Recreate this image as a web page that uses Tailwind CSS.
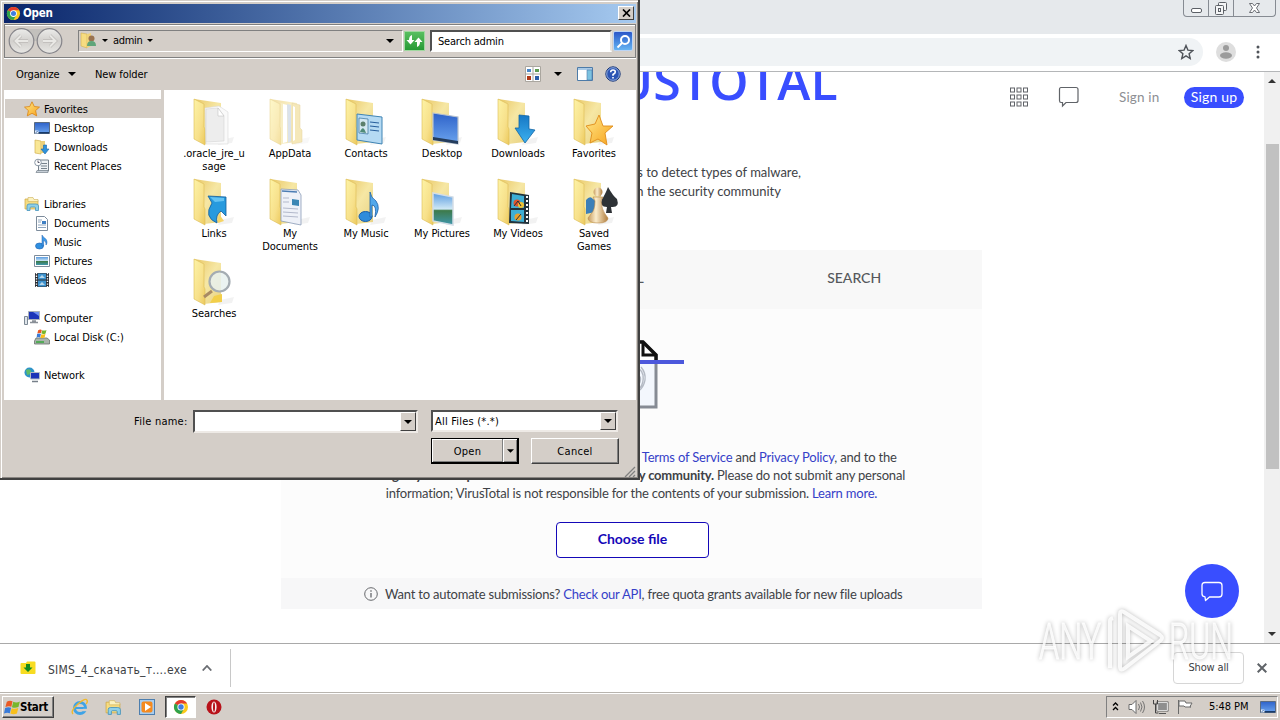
<!DOCTYPE html>
<html lang="en">
<head>
<meta charset="utf-8">
<title>Open</title>
<script src="https://cdn.jsdelivr.net/npm/@tailwindcss/browser@4"></script>
</head>
<body class="bg-white">
<svg width="0" height="0" class="absolute">
  <defs>
    <linearGradient id="gFront" x1="0" y1="0" x2="1" y2="1"><stop offset="0" stop-color="#fdf3a6"/><stop offset=".6" stop-color="#f7e08a"/><stop offset="1" stop-color="#ecc95c"/></linearGradient>
    <linearGradient id="gBack" x1="0" y1="0" x2="1" y2="1"><stop offset="0" stop-color="#e9c765"/><stop offset=".5" stop-color="#f6e7a4"/><stop offset="1" stop-color="#e8d283"/></linearGradient>
    <linearGradient id="gBlue" x1="0" y1="0" x2="0" y2="1"><stop offset="0" stop-color="#2e62c9"/><stop offset="1" stop-color="#6ba4ee"/></linearGradient>
    <linearGradient id="gArrow" x1="0" y1="0" x2="0" y2="1"><stop offset="0" stop-color="#1677c4"/><stop offset="1" stop-color="#3cb1f0"/></linearGradient>
    <linearGradient id="gStar" x1="0" y1="0" x2="1" y2="1"><stop offset="0" stop-color="#ffe98a"/><stop offset="1" stop-color="#f7a21c"/></linearGradient>
    <linearGradient id="gScene" x1="0" y1="0" x2="0" y2="1"><stop offset="0" stop-color="#5a9be0"/><stop offset=".5" stop-color="#cfe8f5"/><stop offset=".55" stop-color="#3d7a4a"/><stop offset="1" stop-color="#3f97ad"/></linearGradient>
    <linearGradient id="gNav" x1="0" y1="0" x2="0" y2="1"><stop offset="0" stop-color="#ececea"/><stop offset=".5" stop-color="#d2d0cd"/><stop offset="1" stop-color="#e8e7e4"/></linearGradient>
    <linearGradient id="gPawn" x1="0" y1="0" x2="1" y2="0"><stop offset="0" stop-color="#c79a5c"/><stop offset=".4" stop-color="#fbeccb"/><stop offset="1" stop-color="#b07c3c"/></linearGradient>
    <symbol id="folder" viewBox="0 0 48 48">
      <path d="M30 42l14-3-2 6-14 2z" fill="#000" opacity=".05"/>
      <path d="M4 1L31 5v39L14 46 4 40z" fill="url(#gBack)"/>
      <path d="M4 1l10 5v23l1 2v16L4 41z" fill="url(#gFront)" stroke="#dcbc55" stroke-width=".6"/>
    </symbol>
    <symbol id="chrome" viewBox="0 0 16 16">
      <circle cx="8" cy="8" r="7" fill="#fbc91b"/>
      <path d="M8 8L1.900 4.500A7 7 0 0 1 14.100 4.500H8z" fill="#e33b2e"/>
      <path d="M1.900 4.500A7 7 0 0 0 8 15l3-5.300L8 8z" fill="#2fa24c"/>
      <circle cx="8" cy="8" r="3.600" fill="#fff"/><circle cx="8" cy="8" r="2.700" fill="#3f7de0"/>
    </symbol>
    <symbol id="star" viewBox="0 0 16 16"><path d="M8 .8l2.300 4.700 5.200.6-3.900 3.500 1.100 5.300L8 12.300l-4.700 2.600 1.100-5.300L.5 6.100l5.200-.6z" fill="url(#gStar)" stroke="#d98312" stroke-width=".8"/></symbol>
    <symbol id="screen" viewBox="0 0 16 16"><path d="M.5 2.500h15v11H.5z" fill="url(#gBlue)" stroke="#5b6b80"/><path d="M1 12h14v1.500H1z" fill="#173a6a"/><path d="M1 10.500h3.500v3H1z" fill="#e6eef8"/><path d="M1.800 12.800l2-2" stroke="#2a5fb0"/></symbol>
    <symbol id="note" viewBox="0 0 16 16"><ellipse cx="5.500" cy="12" rx="4" ry="3" fill="#2f8fe0" stroke="#1c5fae" stroke-width=".6"/><path d="M8 12V1c1 3 5 3 5 7 0 1.500-.5 2.500-1 3 .2-3-1-4-2.400-4.500V12z" fill="#3e9ae8" stroke="#1c5fae" stroke-width=".5"/></symbol>
    <symbol id="film" viewBox="0 0 16 16"><path d="M1 1h14v14H1z" fill="#2a2d33"/><path d="M4 1.500h8v6H4zM4 8.500h8v6H4z" fill="#3e93cf"/><path d="M5 6l3-3 3 3zM5 13l3-3 3 3z" fill="#b8d7ea"/><path d="M2.500 1v14M13.500 1v14" stroke="#fff" stroke-width="1.400" stroke-dasharray="1.300 1.300"/></symbol>
    <symbol id="expl" viewBox="0 0 16 16"><path d="M1 3h5l1 1.500h7V13H1z" fill="#f6dc81" stroke="#cfa63f" stroke-width=".7"/><path d="M4 1.500h5l1 2h4v2H4z" fill="#fbf2c0" stroke="#cfb25c" stroke-width=".6"/><path d="M3 14.500V10q0-2 2-2h7q2.500 0 2.500 2v4.500h-3V12q0-1-1-1H7q-1 0-1 1v2.500z" fill="#8fd0e8" stroke="#4694bd" stroke-width=".8"/></symbol>
    <symbol id="flag" viewBox="0 0 18 18"><path d="M3 3q3-2 6-.5L7.800 8.200Q5 7 1.500 8.600z" fill="#ea5a24"/><path d="M9.800 3q3.500 1.400 7-.3l-1.500 5.800q-3.500 1.600-6.900.2z" fill="#78b72c"/><path d="M1.200 9.500q3.300-1.600 6.300-.3L6.200 15q-3-1.300-6.200.4z" fill="#3a7bd8"/><path d="M8.200 9.700q3.500 1.200 6.900-.2L13.700 15.300q-3.500 1.500-7 .1z" fill="#f8bf1b"/></symbol>
    <symbol id="dn" viewBox="0 0 8 4"><path d="M0 0h8L4 4z" fill="#000"/></symbol>
    <symbol id="bubble" viewBox="0 0 24 24"><path d="M5 3.500h14q3 0 3 3v8.500q0 3-3 3h-9.500l-4 3.500-.5-3.700Q2 17.500 2 15V6.500q0-3 3-3z" fill="none" stroke="currentColor" stroke-width="1.300" stroke-linejoin="round"/></symbol>
  </defs>
</svg>

<div class="relative flex flex-col w-[1280px] h-[720px] overflow-hidden bg-white font-['DejaVu_Sans_Condensed','DejaVu_Sans',sans-serif] text-[11px] text-black">

  <!-- Browser title strip -->
  <div class="h-[34px] shrink-0 bg-[#e6e9ec] flex justify-end pr-1">
    <div class="flex w-[93px] h-[17px] border border-t-0 border-[#868b92] rounded-b-[4px]">
      <div class="w-[25px] border-r border-[#868b92] flex justify-center"><svg width="13" height="16"><rect x="1.500" y="8.500" width="10" height="4" rx="1.500" fill="#fff" stroke="#5c6066"/></svg></div>
      <div class="w-[25px] border-r border-[#868b92] flex justify-center"><svg width="14" height="16" fill="#f4f5f6" stroke="#5c6066"><rect x="4.500" y="2.500" width="8" height="8" rx="1"/><rect x="1.500" y="5.500" width="8" height="9" rx="1"/><rect x="4.500" y="8.500" width="2" height="3"/></svg></div>
      <div class="flex-1 flex justify-center"><svg width="13" height="16"><path d="M1.500 3.500h3l2 2.500 2-2.500h3L8.500 8l3 4.500h-3l-2-2.500-2 2.500h-3l3-4.500z" fill="#fff" stroke="#5c6066" stroke-width=".9"/></svg></div>
    </div>
  </div>
  <!-- Address row -->
  <div class="h-[38px] shrink-0 border-b border-[#b4b6b8] flex items-center pl-2 pr-[18px] pb-px">
    <div class="flex-1 h-7 rounded-full bg-[#f0f3f5] flex items-center justify-end pr-[9px]"><svg width="16" height="16" viewBox="0 0 16 16"><path d="M8 1.500l1.900 4.600 4.900.4-3.700 3.200 1.100 4.800L8 11.900l-4.200 2.600 1.100-4.800L1.200 6.500l4.900-.4z" fill="none" stroke="#50545a" stroke-width="1.400"/></svg></div>
    <svg class="ml-[13px]" width="20" height="20"><circle cx="10" cy="10" r="10" fill="#dedede"/><circle cx="10" cy="6" r="3" fill="#9b9b9b"/><ellipse cx="10" cy="13.500" rx="6" ry="3.200" fill="#9b9b9b"/></svg>
    <svg class="ml-[18px]" width="8" height="16" fill="#50545a"><circle cx="4" cy="3" r="1.500"/><circle cx="4" cy="8" r="1.500"/><circle cx="4" cy="13" r="1.500"/></svg>
  </div>

  <!-- Web page -->
  <div class="h-[571px] shrink-0 flex">
    <div class="flex-1 flex flex-col items-center overflow-hidden font-['Lato',sans-serif] text-[13px] text-[#404246]">
      <div class="w-full h-[50px] shrink-0 flex">
        <div class="flex-1 flex justify-end"><div class="-mt-[25px] h-[68px] leading-[68px] font-['Open_Sans',sans-serif] font-semibold text-[50px] tracking-[0.200px] text-[#394eff]">VIRUSTOTAL</div></div>
        <div class="w-[426px] flex items-center pl-[171px]">
          <svg width="20" height="20" fill="none" stroke="#606368"><rect x="1.500" y="1" width="4" height="4"/><rect x="8" y="1" width="4" height="4"/><rect x="14.500" y="1" width="4" height="4"/><rect x="1.500" y="8" width="4" height="4"/><rect x="8" y="8" width="4" height="4"/><rect x="14.500" y="8" width="4" height="4"/><rect x="1.500" y="15" width="4" height="4"/><rect x="8" y="15" width="4" height="4"/><rect x="14.500" y="15" width="4" height="4"/></svg>
          <svg class="ml-[29px]" width="22" height="22" viewBox="0 0 22 22" fill="none" stroke="#606368" stroke-width="1.200"><path d="M3 1.500h15q2 0 2 2v11q0 2-2 2H8L4.500 20v-3.500H3q-1.500 0-1.500-2v-11q0-2 1.500-2z"/></svg>
          <span class="ml-[39px] w-[42px] text-[13.500px] tracking-[0.150px] text-[#8d8f93] whitespace-nowrap">Sign in</span>
          <span class="ml-[23px] w-[60px] h-[21px] rounded-full bg-[#394eff] text-white text-[14px] text-center leading-[20px] tracking-[0.150px] whitespace-nowrap">Sign up</span>
        </div>
      </div>
      <div class="w-full h-[128px] shrink-0 pt-[41px] leading-[19px] text-right">
        <p class="pr-[463px] tracking-[-0.030px]">Analyze suspicious files and URLs to detect types of malware,</p>
        <p class="pr-[483px]">automatically share them with the security community</p>
      </div>
      <div class="w-[701px] mr-px h-[359px] bg-[#fcfcfc] flex flex-col shrink-0">
        <div class="h-[59px] bg-[#f8f8f8] px-[18px] grid grid-cols-3 items-center text-center text-[14px] font-medium text-[#56585c] pb-[4px]"><span class="pr-[4px]">FILE</span><span class="pr-[2px]">URL</span><span class="pl-[2px]">SEARCH</span></div>
        <div class="h-[269px] flex flex-col items-center">
          <svg class="mt-[30px]" width="104" height="72" viewBox="0 0 104 72"><path d="M27 3h35l14 13v52H27z" fill="#f3f7fd" stroke="#868b94" stroke-width="3"/><path d="M27 24V3h36l13 13v8" fill="#fff" stroke="#111" stroke-width="3.500"/><path d="M63 4v12h12" fill="none" stroke="#111" stroke-width="3"/><g fill="none" stroke="#b4bac4" stroke-width="1.400"><path d="M44 50q-2-22 8-22 9 0 11 8 1 8-3 13M61 28q5 6 4 13-1 6-5 10M57 36q5 1 3 7-2 5-6 5"/></g><path d="M0 23h104" stroke="#4c58dc" stroke-width="4"/></svg>
          <div class="mt-[37px] leading-[18px] text-center whitespace-nowrap tracking-[-0.190px]">
            <p>By submitting data below, you are agreeing to our <a class="text-[#3540c8]">Terms of Service</a> and <a class="text-[#3540c8]">Privacy Policy</a>, and to the</p>
            <p><b>sharing of your sample submission with the security community.</b> Please do not submit any personal</p>
            <p>information; VirusTotal is not responsible for the contents of your submission. <a class="text-[#3540c8]">Learn more.</a></p>
          </div>
          <div class="mt-[20px] ml-[2px] w-[153px] h-9 rounded-[4px] border border-[#1408b8] bg-white text-center leading-[32px] text-[14px] font-bold text-[#1408b8]">Choose file</div>
        </div>
        <div class="flex-1 bg-[#f7f7f8] flex items-center pl-[83px] pt-px whitespace-nowrap"><svg class="mr-[7px]" width="14" height="14" fill="none" stroke="#66686c"><circle cx="7" cy="7" r="6.300"/><path d="M7 6v4.500M7 3.300v1.400" stroke-width="1.300"/></svg><span class="pt-[2px] tracking-[-0.220px]">Want to automate submissions? <a class="text-[#3540c8]">Check our API</a>, free quota grants available for new file uploads</span></div>
      </div>
    </div>
    <div class="w-4 bg-[#f0f0f0] flex flex-col items-center">
      <svg class="mt-[7px]" width="8" height="4"><path d="M0 4h8L4 0z" fill="#333"/></svg>
      <div class="mt-[61px] w-[13px] h-[325px] bg-[#c1c1c1]"></div>
      <svg class="mt-auto mb-[7px]" width="8" height="4"><path d="M0 0h8L4 4z" fill="#333"/></svg>
    </div>
  </div>

  <!-- Download shelf -->
  <div class="h-[49px] shrink-0 border-t border-[#a9a9a9] bg-white flex items-center">
    <svg class="ml-5" width="16" height="14"><path d="M.5 3q0-1 1-1H6l1-1.500h7.500q1 0 1 1V12q0 1-1 1h-13q-1 0-1-1z" fill="#f7dc22"/><path d="M6 3h4v3.500h2.500L8 11 3.500 6.500H6z" fill="#148a1e"/></svg>
    <span class="ml-3 w-[140px] pt-1 text-[12px] text-[#3c4043] whitespace-nowrap tracking-[0.250px]">SIMS_4_скачать_т….exe</span>
    <svg class="ml-[14px]" width="10" height="6" fill="none" stroke="#6a6d72" stroke-width="1.800"><path d="M.7 5.500L5 1l4.300 4.500"/></svg>
    <div class="ml-[18px] h-[38px] w-px bg-[#c8c8c8]"></div>
    <div class="ml-auto w-[71px] h-8 border border-[#d6d6d6] rounded-[4px] text-center leading-[29px] tracking-[-0.150px] text-[#3c4043]">Show all</div>
    <svg class="ml-[13px] mr-[13px]" width="10" height="10" stroke="#5f6368" stroke-width="2"><path d="M.7.7l8.600 8.600M9.300.7L.7 9.300"/></svg>
  </div>

  <!-- Taskbar -->
  <div class="h-7 shrink-0 bg-[#d4cec8] border-t border-[#b8b4ae] shadow-[inset_0_1px_0_#fff] flex items-center pl-[2px] pr-[2px] pt-px">
    <div class="w-[52px] h-[22px] border border-[#fff] border-r-[#404040] border-b-[#404040] shadow-[inset_-1px_-1px_0_#808080] flex items-center pl-px"><svg width="17" height="17"><use href="#flag"/></svg><b class="-ml-px pt-[2px] text-[11.500px] tracking-[-0.300px] whitespace-nowrap">Start</b></div>
    <svg class="ml-[17px]" width="18" height="18" viewBox="0 0 18 18"><circle cx="9" cy="10" r="5.500" fill="none" stroke="#3fa3e6" stroke-width="3"/><path d="M4.500 10h10" stroke="#3fa3e6" stroke-width="2"/><path d="M12 12h5" stroke="#d4cec8" stroke-width="2.400"/><path d="M2 16Q-1 13 7 6T16 2.500Q17 4 15 6" fill="none" stroke="#f0b92c" stroke-width="1.400"/></svg>
    <svg class="ml-[16px]" width="17" height="17"><use href="#expl"/></svg>
    <svg class="ml-[17px]" width="16" height="16"><rect x=".5" y=".5" width="15" height="15" fill="#a9cdee" stroke="#4d7eae"/><rect x="2.500" y="2.500" width="11" height="11" rx="2" fill="#f58a1e"/><path d="M6 4v8l6-4z" fill="#fff"/></svg>
    <div class="ml-[10px] w-[31px] h-[22px] bg-white border border-[#404040] border-r-white border-b-white shadow-[inset_1px_1px_0_#808080] flex items-center justify-center"><svg width="16" height="16"><use href="#chrome"/></svg></div>
    <svg class="ml-[10px]" width="16" height="16"><circle cx="8" cy="8" r="7.500" fill="#b8121a"/><ellipse cx="8" cy="8" rx="2.600" ry="5.500" fill="#f7f0f0"/><ellipse cx="8" cy="8" rx="1" ry="4.800" fill="#b8121a"/></svg>
    <div class="ml-auto w-[172px] h-[22px] border border-[#808080] border-r-white border-b-white flex items-center pl-[5px]">
      <svg class="-mt-[2px]" width="7" height="11" fill="none" stroke="#000" stroke-width="1.300"><path d="M1 4.500l2.500-2.500L6 4.500M1 9l2.500-2.500L6 9"/></svg>
      <svg class="ml-[9px]" width="17" height="16" viewBox="0 0 17 16" fill="none" stroke="#6a6a6a"><path d="M1 5.500h3l4-4v13l-4-4H1z" fill="#fff"/><path d="M10.500 5q2 3 0 6M12.500 3.500q3 4.500 0 9M14.500 2q4 6 0 12" stroke-width=".9"/></svg>
      <svg class="ml-[7px]" width="17" height="16" viewBox="0 0 17 16"><path d="M5.500 3.500h10v8h-10z" fill="#8f8f8f" stroke="#fff" stroke-width="1.200"/><path d="M4.800 2.800h11.400v9.400H4.800z" fill="none" stroke="#555" stroke-width=".7"/><path d="M7 14.500h7" stroke="#555"/><path d="M1.500 1v4h4V1M3.500 5v9h3" fill="none" stroke="#444"/></svg>
      <svg class="ml-[8px]" width="16" height="16" viewBox="0 0 16 16"><path d="M1.500 1v14M2 2h6l1 2h6l-2 3.500 1 .5H8L7 7H2z" fill="#fff" stroke="#6a6a6a"/></svg>
      <span class="ml-[16px] w-[40px] pt-px tracking-[-0.050px] whitespace-nowrap">5:48 PM</span>
      <svg class="ml-[11px]" width="16" height="16"><use href="#screen"/></svg>
    </div>
  </div>

  <!-- Support chat button -->
  <div class="absolute left-[1185px] top-[564px] w-[54px] h-[54px] rounded-full bg-[#394eff] text-white flex items-center justify-center"><svg width="24" height="24"><use href="#bubble"/></svg></div>

  <!-- Watermark -->
  <div class="absolute left-[1037px] top-[608px] w-[198px] h-[68px]">
    <svg class="overflow-visible" width="198" height="68" viewBox="0 0 198 68" style="filter:drop-shadow(0 0 2px rgba(0,0,0,.32))">
      <g fill="#fff" fill-opacity=".8" font-family="Roboto, sans-serif" font-size="50" font-weight="300" stroke="#fff" stroke-opacity=".8" stroke-width="1"><text x="2" y="51" textLength="62" lengthAdjust="spacingAndGlyphs">ANY</text><text x="132" y="51" textLength="64" lengthAdjust="spacingAndGlyphs">RUN</text></g>
      <path d="M73 60V13q0-2 3-3M83 59V6q0-4 4-2l36 23q4 3 0 6L88 60q-5 4-5-2M91 18v31l23-16z" fill="none" stroke="#fff" stroke-opacity=".85" stroke-width="4"/>
    </svg>
  </div>

  <!-- File dialog window -->
  <div class="absolute left-0 top-0 w-[640px] h-[480px] bg-[#d4cec8] border-r-2 border-b-2 border-[#404040] flex flex-col pl-1 pr-[2px] pt-[3px] shadow-[inset_1px_1px_0_#d4cec8,inset_2px_2px_0_#fff,inset_-1px_-1px_0_#8a8682]">
    <div class="h-[19px] mt-px shrink-0 bg-linear-to-r from-[#0a246a] to-[#a6caf0] flex items-center pl-[2px] pr-[2px] pb-px text-white">
      <svg width="15" height="15"><use href="#chrome"/></svg><b class="ml-[2px] pt-[2px] text-[11.500px] tracking-[-0.200px]">Open</b>
      <div class="ml-auto w-4 h-[14px] bg-[#d4cec8] border border-white border-r-[#404040] border-b-[#404040] flex items-center justify-center"><svg width="9" height="8" stroke="#000" stroke-width="1.700"><path d="M1 .5l7 7M8 .5l-7 7"/></svg></div>
    </div>
    <div class="h-[34px] shrink-0 mt-px border border-[#808080] border-b-[#808080] shadow-[0_1px_0_#fff,inset_0_1px_0_#fff] flex items-center pl-[3px]">
      <svg width="56" height="28" viewBox="0 0 56 28"><path d="M13 2h29v12H13z" fill="#c2c0bc"/><g fill="url(#gNav)" stroke="#86858a" stroke-width="1.200"><circle cx="13.500" cy="14" r="12.300"/><circle cx="41.500" cy="14" r="12.300"/></g><g fill="none" stroke="#bdbbb8" stroke-width="3.400"><path d="M20 14H8M13 8.500L7.500 14l5.500 5.500M35 14h12M42 8.500l5.500 5.500L42 19.500"/></g><g fill="none" stroke="#e9e8e5" stroke-width="2"><path d="M20 14H8M13 8.500L7.500 14l5.500 5.500M35 14h12M42 8.500l5.500 5.500L42 19.500"/></g></svg>
      <div class="ml-[14px] w-[325px] h-[22px] border border-[#808080] border-r-white border-b-white flex items-center pl-px pb-px">
        <svg width="17" height="17" viewBox="0 0 17 17"><path d="M1 1l6 1v14l-6-2z" fill="#f6dc81" stroke="#d3b150" stroke-width=".6"/><path d="M7 2l4-1v13l-4 2z" fill="#efd27a"/><circle cx="11.500" cy="6.500" r="3" fill="#9a7350"/><path d="M7 14q0-5 4.500-5T16 14z" fill="#5fa57a"/></svg>
        <svg class="ml-[5px]" width="6" height="3"><use href="#dn"/></svg>
        <span class="ml-[5px] w-[28px] pt-[2px] whitespace-nowrap tracking-[-0.300px]">admin</span>
        <svg class="ml-[6px]" width="6" height="3"><use href="#dn"/></svg>
        <svg class="ml-auto mr-[8px]" width="8" height="4"><use href="#dn"/></svg>
      </div>
      <div class="ml-[1px] w-[21px] h-[20px] border border-[#a0d8a0] bg-linear-to-b from-[#58bf60] to-[#259a35] flex items-center justify-center"><svg width="17" height="14" viewBox="0 0 17 14" fill="#fff"><path d="M6 1v5h2.500L4.500 10.500.5 6H3Q3 2 6 1zM11 13V8H8.500l4-4.500L16.500 8H14q0 4-3 5z"/></svg></div>
      <div class="ml-[5px] w-[182px] h-[22px] bg-white border-2 border-[#505050] border-r-[#e8e4de] border-b-white pl-[6px] leading-[20px] tracking-[-0.200px]">Search admin</div>
      <div class="ml-[1px] w-[20px] h-5 rounded-[2px] bg-linear-to-b from-[#2b56c8] to-[#68b4f2] border border-[#bcd4f4] flex items-center justify-center"><svg width="15" height="15" fill="none" stroke="#fff" stroke-width="2"><circle cx="9" cy="6" r="4"/><path d="M6 9l-4.500 4.500"/></svg></div>
    </div>
    <div class="h-[32px] shrink-0 flex items-center pl-3 pr-[15px]">
      <span class="w-[44px] pt-[2px] whitespace-nowrap tracking-[-0.100px]">Organize</span><svg class="ml-[8px]" width="8" height="4"><use href="#dn"/></svg><span class="ml-[19px] pt-[2px] tracking-[-0.100px]">New folder</span>
      <svg class="ml-auto" width="16" height="16"><path d="M.5.5h15v15H.5z" fill="#fff" stroke="#aaa69f"/><path d="M8 0v16M0 8h16" stroke="#aaa69f"/><path d="M2 3h4v3H2z" fill="#4a87c8"/><path d="M10 3h4v3h-4z" fill="#5e9c52"/><path d="M2 10h4v4H2z" fill="#b03818"/><path d="M10 10h4v4h-4z" fill="#2b5da8"/></svg>
      <svg class="ml-[13px]" width="8" height="4"><use href="#dn"/></svg>
      <svg class="ml-[15px]" width="16" height="14"><path d="M.5.5h15v13H.5z" fill="#fff" stroke="#4d7ba8"/><path d="M1 1h14v2H1z" fill="#a9c9e6"/><path d="M10 3h5v10h-5z" fill="#7cc2e0" stroke="#4d7ba8" stroke-width=".6"/></svg>
      <svg class="ml-[12px]" width="16" height="16"><circle cx="8" cy="8" r="7.200" fill="#2c55b4" stroke="#1d3a78"/><circle cx="8" cy="8" r="6.300" fill="none" stroke="#a8bfe6" stroke-width=".8"/><path d="M5.700 6.200Q5.700 4 8 4t2.300 2Q10.300 7.200 8 8.500v1.300M8 11v1.600" fill="none" stroke="#fff" stroke-width="1.600"/></svg>
    </div>
    <div class="h-[310px] shrink-0 flex bg-white">
      <div class="w-[157px] shrink-0 pt-[9px] flex flex-col leading-[19px] whitespace-nowrap tracking-[-0.100px] [&>div]:pt-[2px] [&_svg]:-mt-[2px]">
        <div class="h-[19px] ml-px bg-[#d4cec8] flex items-center pl-[19px] gap-1"><svg width="16" height="16"><use href="#star"/></svg>Favorites</div>
        <div class="h-[19px] flex items-center pl-[30px] gap-1"><svg width="16" height="16"><use href="#screen"/></svg>Desktop</div>
        <div class="h-[19px] flex items-center pl-[30px] gap-1"><svg width="16" height="16"><path d="M1 1l6 1v13l-6-1z" fill="#f9e796" stroke="#d3b150" stroke-width=".7"/><path d="M7 2h4v12H7z" fill="#ecd07a"/><path d="M9.500 6h3v4H15l-4 5-4-5h2.500z" fill="#2f93dc" stroke="#1a65a8" stroke-width=".6"/></svg>Downloads</div>
        <div class="h-[19px] flex items-center pl-[30px] gap-1"><svg width="16" height="16"><path d="M4.500 2h10v11h-10z" fill="#eef2f5" stroke="#77828c"/><path d="M7 5.500h6M7 8h6M7 10.500h6" stroke="#77828c"/><path d="M2 14.500h12v-2H3z" fill="#c8d0d8" stroke="#77828c" stroke-width=".7"/><circle cx="4" cy="4.500" r="3.300" fill="#fff" stroke="#8b98a6"/><path d="M4 2.500v2h1.500" stroke="#556" fill="none"/></svg>Recent Places</div>
        <div class="h-[19px] mt-[19px] flex items-center pl-5 gap-1"><svg width="16" height="16"><use href="#expl"/></svg>Libraries</div>
        <div class="h-[19px] flex items-center pl-[30px] gap-1"><svg width="16" height="16"><path d="M2.500 1.500h8l3 3v11h-11z" fill="#fff" stroke="#7d8c9c"/><path d="M4 5h4M4 7h3M4 10h8M4 12.500h8" stroke="#8fa6be"/><path d="M8 6h4v3H8z" fill="#3f80c4"/></svg>Documents</div>
        <div class="h-[19px] flex items-center pl-[30px] gap-1"><svg width="16" height="16"><use href="#note"/></svg>Music</div>
        <div class="h-[19px] flex items-center pl-[30px] gap-1"><svg width="16" height="16"><path d="M.5 2.500h15v11H.5z" fill="#fff" stroke="#7d8c9c"/><path d="M2 4h12v8H2z" fill="url(#gScene)"/></svg>Pictures</div>
        <div class="h-[19px] flex items-center pl-[30px] gap-1"><svg width="16" height="16"><use href="#film"/></svg>Videos</div>
        <div class="h-[19px] mt-[19px] flex items-center pl-5 gap-1"><svg width="16" height="16"><path d="M4.500 1.500h11v8h-11z" fill="#1c34b8" stroke="#a9b0b8"/><path d="M9 2h6v4z" fill="#6d8ef0"/><path d="M6 12.500h8M8 11h4" stroke="#8a9098" stroke-width="1.500"/><path d="M.5 6.500h3v8h-3z" fill="#dfe5ea" stroke="#7c8894"/></svg>Computer</div>
        <div class="h-[19px] flex items-center pl-[30px] gap-1"><svg width="16" height="16"><path d="M2 9h11l2.500 2v4H.5v-3z" fill="#aab4ac" stroke="#68726b" stroke-width=".8"/><path d="M2 13h8" stroke="#36a83c" stroke-width="1.500"/><g transform="scale(.6)"><use href="#flag" x="4" y="-1" width="18" height="18"/></g></svg>Local Disk (C:)</div>
        <div class="h-[19px] mt-[19px] flex items-center pl-5 gap-1"><svg width="16" height="16"><circle cx="5.500" cy="5.500" r="5" fill="#2d93c8"/><path d="M2 3q4-2 5 1T3 8z" fill="#5fbc68"/><path d="M6.500 5.500h9v6.500h-9z" fill="#1c34b8" stroke="#b4bcc4"/><path d="M8 14.500h6" stroke="#77808a" stroke-width="1.500"/></svg>Network</div>
      </div>
      <div class="w-[3px] shrink-0 bg-[#d4cec8]"></div>
      <div class="flex-1 pl-3 pt-[8px] grid grid-cols-[repeat(6,76px)] auto-rows-[80px] text-center leading-[13px] tracking-[-0.080px]">
        <div class="flex flex-col items-center"><svg width="48" height="48"><use href="#folder"/><path d="M15 10l14-2 9 6v32l-22 0z" fill="#fafafa" stroke="#d9d9d9" stroke-width=".6"/><path d="M16 11l12-1 6 8v25l-18 1z" fill="#ededed" stroke="#cfcfcf" stroke-width=".5"/><path d="M28 10v8h6z" fill="#fff" stroke="#bbb" stroke-width=".5"/></svg><span class="mt-px">.oracle_jre_u<br>sage</span></div>
        <div class="flex flex-col items-center"><svg width="48" height="48" opacity=".6"><use href="#folder"/><path d="M15 5l8 2v36l-8 3z" fill="#f3e3a0"/><path d="M17 6l4 1v37l-4 1z" fill="#fff"/><path d="M21 6l4 1v36l-3 2z" fill="#c3cfdf"/><path d="M26 5l8 2v23l2 2v12l-10 2z" fill="#efd98c" stroke="#d6bb60" stroke-width=".5"/><path d="M27 8l2 1v33l-2 1z" fill="#fff"/></svg><span class="mt-px">AppData</span></div>
        <div class="flex flex-col items-center"><svg width="48" height="48"><use href="#folder"/><path d="M15 16l25 3v27l-25-4z" fill="#b5daf3" stroke="#3f84b4"/><path d="M17 20l9 1v15l-9-1z" fill="#d4e8f2" stroke="#36719c" stroke-width=".7"/><circle cx="21" cy="26" r="2.500" fill="#5c7f6c"/><path d="M18 34q3-8 6 1z" fill="#4f8b78"/><path d="M28 24l9 1M28 28l9 1M28 32l9 1" stroke="#285f9c" stroke-width="1.200"/></svg><span class="mt-px">Contacts</span></div>
        <div class="flex flex-col items-center"><svg width="48" height="48"><use href="#folder"/><path d="M15 15l25 4v27l-25-4z" fill="url(#gBlue)" stroke="#b8c2ce" stroke-width="1.200"/><path d="M15 39l25 4v3l-25-4z" fill="#243c5c"/></svg><span class="mt-px">Desktop</span></div>
        <div class="flex flex-col items-center"><svg width="48" height="48"><use href="#folder"/><path d="M25 17l10 1v13l6 1-10 13-10-15 4 0z" fill="url(#gArrow)" stroke="#1264a5" stroke-width=".8"/></svg><span class="mt-px">Downloads</span></div>
        <div class="flex flex-col items-center"><svg width="48" height="48"><use href="#folder"/><path d="M29 17l4 11 10 0-8 7 2 12-9-6-8 4 2-10-6-7 9-2z" fill="url(#gStar)" stroke="#e08c1a" stroke-width=".9"/></svg><span class="mt-px">Favorites</span></div>
        <div class="flex flex-col items-center"><svg width="48" height="48"><use href="#folder"/><path d="M18 18l18 1v19l-5-5q-6 4-4 12-14-6-5-20z" fill="#279ade" stroke="#155d9b" stroke-width=".8"/><path d="M20 19l14 1v3l-9 1z" fill="#65c3f2"/><path d="M29 36l5 7-6 2z" fill="#f6d464"/></svg><span class="mt-px">Links</span></div>
        <div class="flex flex-col items-center"><svg width="48" height="48"><use href="#folder"/><path d="M15 11l17 1 3 5v30l-20-4z" fill="#eef1f8" stroke="#8a9cb8" stroke-width=".8"/><path d="M16 13l15 1" stroke="#4c7db4" stroke-width="1.500"/><path d="M26 21l7 1v6l-7-1z" fill="#3b86b4"/><path d="M17 20h6M17 24h6M17 30l15 1M17 34l15 1M17 38l15 1" stroke="#b3b9cc"/></svg><span class="mt-px">My<br>Documents</span></div>
        <div class="flex flex-col items-center"><svg width="48" height="48"><use href="#folder"/><ellipse cx="23.500" cy="38.500" rx="6.500" ry="5" fill="#2f8cdc" stroke="#1b5fa8"/><path d="M28 39V14q1 6 6 9 5 7-1 16 2-12-3-12v12z" fill="#53a8ea" stroke="#1b5fa8" stroke-width=".8"/></svg><span class="mt-px">My Music</span></div>
        <div class="flex flex-col items-center"><svg width="48" height="48"><use href="#folder"/><path d="M15 15l20 4v28l-20-4z" fill="url(#gScene)" stroke="#d3dde6" stroke-width="1.500"/></svg><span class="mt-px">My Pictures</span></div>
        <div class="flex flex-col items-center"><svg width="48" height="48"><use href="#folder"/><path d="M16 14l19 3v29l-20-1z" fill="#23333c"/><path d="M18 16l12 2v12l-13 0zM17 32l13 0v12l-13-1z" fill="#3daed4"/><circle cx="23" cy="25" r="3.500" fill="#e0542c"/><circle cx="27" cy="27" r="3" fill="#f1c232"/><circle cx="24" cy="39" r="3.500" fill="#e8a02c"/><path d="M20 28l4-5 3 5M22 42l5-6" stroke="#23333c" fill="none"/><path d="M33 18v27" stroke="#fff" stroke-width="2" stroke-dasharray="2 2"/></svg><span class="mt-px">My Videos</span></div>
        <div class="flex flex-col items-center"><svg class="overflow-visible" width="48" height="48"><use href="#folder"/><path d="M16 22q4-5 7-1l5 3-3 10-9 2z" fill="#3c7fb8"/><path d="M38 9q5 9 9 12 3 9-6 8l1 6h-6l1-6q-8 0-5-8 3-4 6-12z" fill="#2e3236"/><circle cx="28" cy="14" r="4.500" fill="url(#gPawn)"/><path d="M23 19h10l-2 4q1 9 4 13l3 4q0 5-10 5t-10-5l3-4q4-4 4-13z" fill="url(#gPawn)" stroke="#b98a4c" stroke-width=".6"/></svg><span class="mt-px">Saved<br>Games</span></div>
        <div class="flex flex-col items-center"><svg width="48" height="48"><use href="#folder"/><path d="M24 38l8-2v8l-12 1z" fill="#f2cf4a"/><path d="M22 33l-8 6" stroke="#a88a64" stroke-width="3"/><circle cx="29.500" cy="23.500" r="10" fill="#e8f1ee" fill-opacity=".85" stroke="#a4acb2" stroke-width="2.200"/></svg><span class="mt-px">Searches</span></div>
      </div>
    </div>
    <div class="flex-1 flex flex-col pl-[130px] pt-[10px]">
      <div class="flex items-start h-[23px]">
        <span class="w-[59px] leading-[23px] whitespace-nowrap tracking-[0.250px]">File name:</span>
        <div class="w-[225px] h-[23px] bg-white border-2 border-[#505050] border-r-[#eeeae6] border-b-[#eeeae6] flex justify-end"><div class="w-4 h-[19px] bg-[#d4cec8] border border-white border-r-[#404040] border-b-[#404040] flex items-center justify-center"><svg width="8" height="4"><use href="#dn"/></svg></div></div>
        <div class="ml-[13px] w-[187px] h-[22px] bg-white border-2 border-[#505050] border-r-[#eeeae6] border-b-[#eeeae6] flex justify-between pl-[2px] leading-[19px] tracking-[0.200px]">All Files (*.*)<div class="w-4 bg-[#d4cec8] border border-white border-r-[#404040] border-b-[#404040] flex items-center justify-center"><svg width="8" height="4"><use href="#dn"/></svg></div></div>
      </div>
      <div class="flex mt-[5px] pl-[297px]">
        <div class="w-[88px] h-[26px] border-2 border-black border-t border-l shadow-[inset_1px_1px_0_#fff,inset_-1px_-1px_0_#808080] flex text-center leading-[25px] tracking-[0.300px]"><span class="flex-1 pl-px border-r border-[#808080]">Open</span><span class="w-[14px] border-l border-white flex items-center justify-center"><svg width="7" height="4"><use href="#dn"/></svg></span></div>
        <div class="ml-3 w-[88px] h-[26px] border border-white border-r-[#404040] border-b-[#404040] shadow-[inset_-1px_-1px_0_#808080] text-center leading-[25px] tracking-[0.300px]">Cancel</div>
      </div>
    </div>
    <svg class="absolute right-[2px] bottom-0" width="12" height="12" stroke="#808080" stroke-width="1.300"><path d="M1 11L11 1M5 11l6-6M9 11l2-2"/></svg>
  </div>
</div>
</body>
</html>
